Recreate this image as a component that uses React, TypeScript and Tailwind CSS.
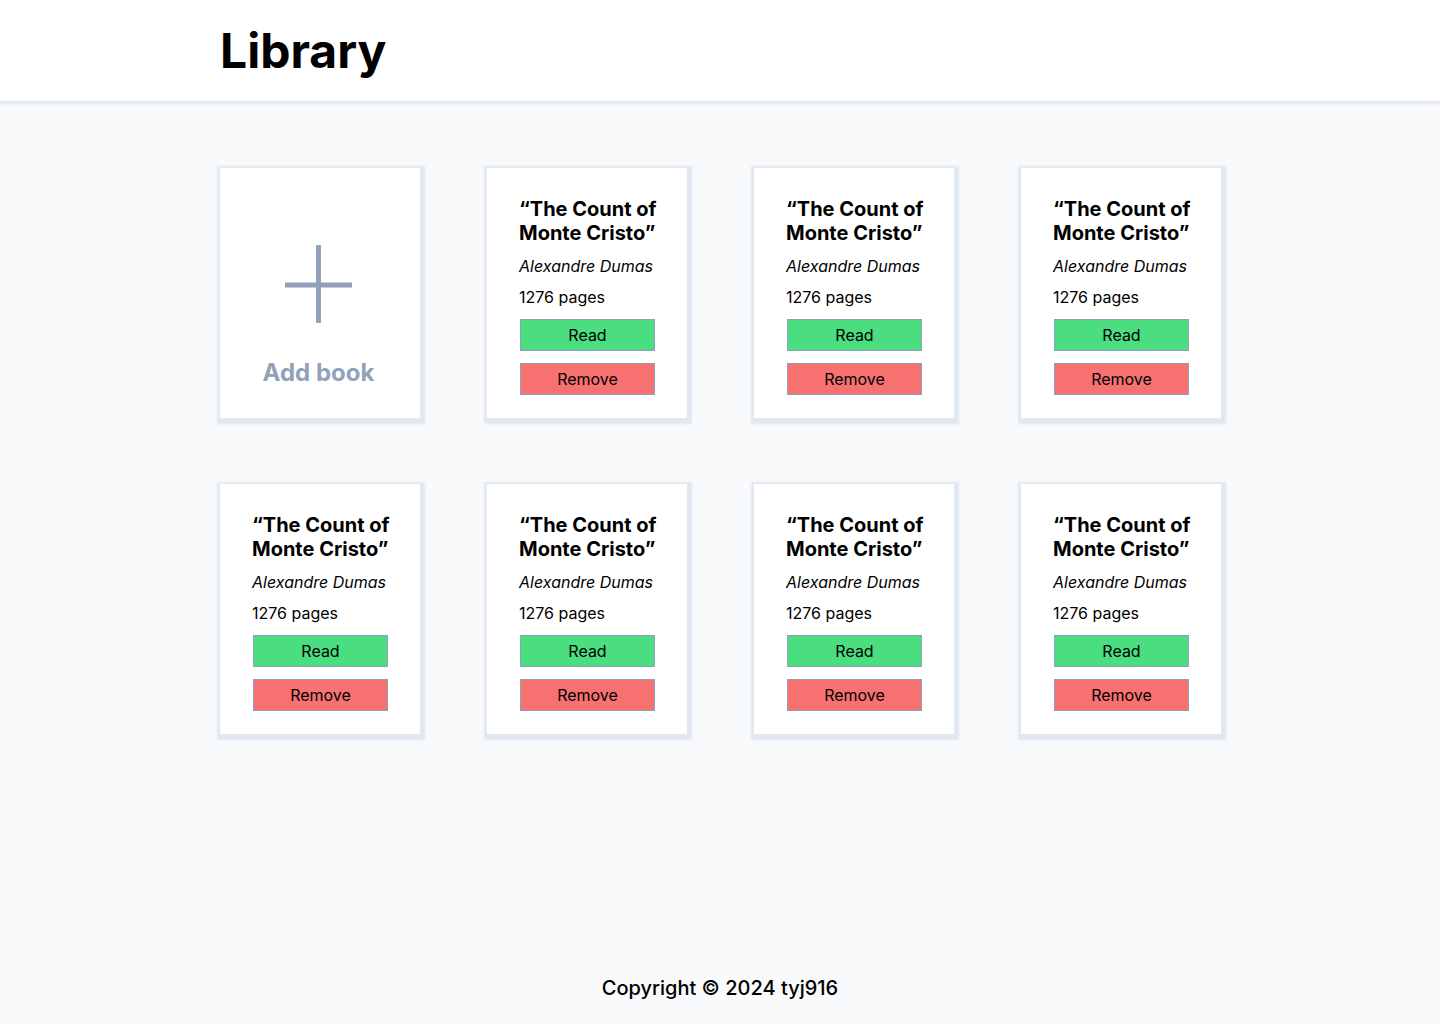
const books = Array.from({ length: 7 }, (_, id) => ({
  id,
  title: ["“The Count of", "Monte Cristo”"],
  author: "Alexandre Dumas",
  pages: 1276,
}));

const card =
  "min-h-[250px] w-[200px] bg-white shadow-[1px_2px_2px_4px_#e2e8f0]";

function BookCard({ book }: { book: (typeof books)[number] }) {
  return (
    <article className={`${card} flex flex-col px-8 pt-[29px] pb-[23px]`}>
      <h2 className="text-xl leading-6 font-bold whitespace-nowrap">
        {book.title[0]}
        <br />
        {book.title[1]}
      </h2>
      <p className="mt-[9px] text-base leading-6 italic whitespace-nowrap">{book.author}</p>
      <p className="mt-[7px] text-base leading-6">{book.pages} pages</p>
      <button
        type="button"
        className="mt-[10px] ml-px h-8 w-[135px] border border-slate-400 bg-[#4ade80] text-base leading-6"
      >
        Read
      </button>
      <button
        type="button"
        className="mt-3 ml-px h-8 w-[135px] border border-slate-400 bg-[#f87171] text-base leading-6"
      >
        Remove
      </button>
    </article>
  );
}

export default function App() {
  return (
    <div className="flex min-h-screen flex-col bg-slate-50 font-['Inter',sans-serif] text-black">
      <header className="bg-white py-5 shadow-[0_2px_3px_1px_#e2e8f0]">
        <h1 className="mx-auto w-full max-w-[1000px] text-5xl leading-[61px] font-bold">Library</h1>
      </header>
      <main className="mx-auto grid w-full max-w-[1002px] flex-1 grid-cols-[repeat(auto-fill,200px)] content-start justify-between gap-x-10 gap-y-[66px] pt-[67px] pb-16 pl-px">
        <button type="button" className={`${card} flex flex-col items-center text-slate-400`}>
          <svg className="mt-[77px] mr-[3px]" width="67" height="78" viewBox="0 0 67 78" aria-hidden="true">
            <path d="M33.5 0v78M0 40h67" stroke="currentColor" strokeWidth="5" />
          </svg>
          <span className="mt-8 mr-[3px] text-2xl leading-9 font-bold">Add book</span>
        </button>
        {books.map((book) => (
          <BookCard key={book.id} book={book} />
        ))}
      </main>
      <footer className="pb-5 text-center text-xl leading-8 font-medium">Copyright © 2024 tyj916</footer>
    </div>
  );
}
